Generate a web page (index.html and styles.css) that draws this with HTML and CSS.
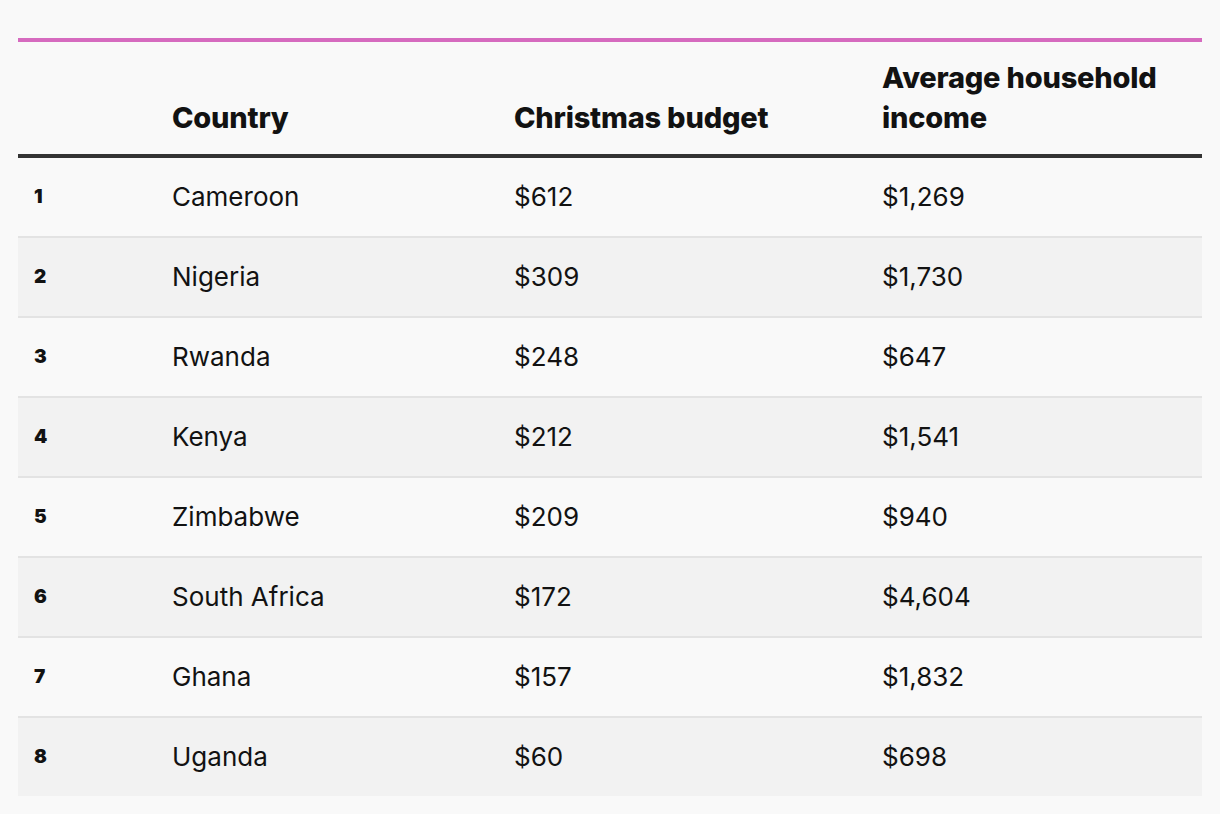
FILE: index.html
```html
<!DOCTYPE html>
<html lang="en">
<head>
<meta charset="utf-8">
<title>Christmas budget</title>
<link rel="stylesheet" href="styles.css">
</head>
<body>
<div class="wrap">
<table class="data">
  <colgroup>
    <col class="c-rank"><col class="c-country"><col class="c-budget"><col class="c-income">
  </colgroup>
  <thead>
    <tr>
      <th></th>
      <th>Country</th>
      <th>Christmas budget</th>
      <th>Average household income</th>
    </tr>
  </thead>
  <tbody>
    <tr><td class="rank">1</td><td>Cameroon</td><td>$612</td><td>$1,269</td></tr>
    <tr><td class="rank">2</td><td>Nigeria</td><td>$309</td><td>$1,730</td></tr>
    <tr><td class="rank">3</td><td>Rwanda</td><td>$248</td><td>$647</td></tr>
    <tr><td class="rank">4</td><td>Kenya</td><td>$212</td><td>$1,541</td></tr>
    <tr><td class="rank">5</td><td>Zimbabwe</td><td>$209</td><td>$940</td></tr>
    <tr><td class="rank">6</td><td>South Africa</td><td>$172</td><td>$4,604</td></tr>
    <tr><td class="rank">7</td><td>Ghana</td><td>$157</td><td>$1,832</td></tr>
    <tr><td class="rank">8</td><td>Uganda</td><td>$60</td><td>$698</td></tr>
  </tbody>
</table>
</div>
</body>
</html>
```
FILE: styles.css
```css
html, body {
  margin: 0;
  padding: 0;
  background: #f9f9f9;
  color: #121212;
  font-family: Inter, "Liberation Sans", sans-serif;
}
.wrap {
  padding: 38px 18px 0 18px;
}
.data {
  width: 1184px;
  border-collapse: collapse;
  table-layout: fixed;
  border-top: 4px solid #d66bbf;
}
.c-rank { width: 138px; }
.c-country { width: 342px; }
.c-budget { width: 368px; }
.c-income { width: 336px; }
.data th {
  text-align: left;
  vertical-align: bottom;
  font-size: 29px;
  font-weight: 800;
  line-height: 40px;
  letter-spacing: -0.2px;
  padding: 16px 16px 16px 16px;
  border-bottom: 4px solid #333333;
}
.data td {
  font-size: 26px;
  font-weight: 400;
  height: 78px;
  padding: 0 16px;
  vertical-align: middle;
  line-height: 30px;
}
.data tbody tr + tr td {
  border-top: 2px solid #e3e3e3;
}
.data tbody tr:nth-child(even) td {
  background: #f2f2f2;
}
.data td.rank {
  font-size: 19px;
  font-weight: 900;
}
```
